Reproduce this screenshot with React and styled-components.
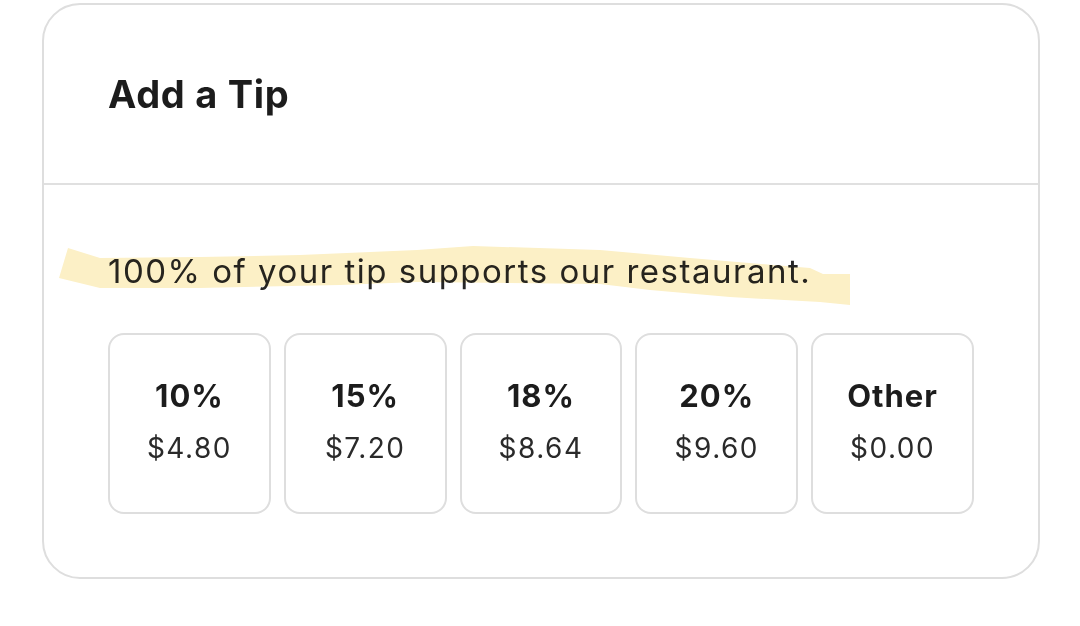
import React from "react";
import styled, { createGlobalStyle } from "styled-components";

const Global = createGlobalStyle`
  html, body { margin: 0; padding: 0; background: #ffffff; }
  body { font-family: Inter, "Noto Sans", sans-serif; color: #1f1f1f; }
`;

const Page = styled.div`
  width: 1080px;
  height: 626px;
  padding: 3px 0 0 42px;
  box-sizing: border-box;
`;

const Card = styled.section`
  position: relative;
  width: 998px;
  height: 576px;
  box-sizing: border-box;
  border: 2px solid #dedede;
  border-radius: 38px;
  background: #fff;
  display: flex;
  flex-direction: column;
`;

const Header = styled.header`
  height: 180px;
  box-sizing: border-box;
  border-bottom: 2px solid #e0e0e0;
  display: flex;
  align-items: center;
  padding: 0 64px;
`;

const Title = styled.h2`
  margin: 0;
  font-size: 38px;
  font-weight: 700;
  letter-spacing: 0.7px;
  color: #1c1c1c;
`;

const Body = styled.div`
  padding: 66px 64px 0;
  display: flex;
  flex-direction: column;
`;

const Subtitle = styled.p`
  position: relative;
  z-index: 1;
  margin: 0;
  font-size: 33px;
  line-height: 40px;
  font-weight: 400;
  letter-spacing: 1.5px;
  color: #262626;
`;

const Highlight = styled.svg`
  position: absolute;
  left: -44px;
  top: -5px;
  width: 1080px;
  height: 626px;
  pointer-events: none;
  mix-blend-mode: multiply;
  z-index: 2;
`;

const Options = styled.div`
  display: flex;
  gap: 13px;
  margin-top: 42px;
`;

const Option = styled.button`
  width: 163px;
  height: 181px;
  box-sizing: border-box;
  border: 2px solid #dedede;
  border-radius: 16px;
  background: #fff;
  display: flex;
  flex-direction: column;
  align-items: center;
  justify-content: center;
  gap: 16px;
  padding: 0 0 6px;
  font-family: inherit;
  cursor: pointer;
`;

const Percent = styled.span`
  font-size: 31px;
  font-weight: 700;
  line-height: 38px;
  letter-spacing: 1px;
  color: #1c1c1c;
`;

const Amount = styled.span`
  font-size: 28px;
  font-weight: 400;
  line-height: 34px;
  letter-spacing: 1.5px;
  color: #2a2a2a;
`;

const tips = [
  { label: "10%", amount: "$4.80" },
  { label: "15%", amount: "$7.20" },
  { label: "18%", amount: "$8.64" },
  { label: "20%", amount: "$9.60" },
  { label: "Other", amount: "$0.00" },
];

export default function App() {
  return (
    <Page>
      <Global />
      <Card>
        <Header>
          <Title>Add a Tip</Title>
        </Header>
        <Body>
          <Subtitle>100% of your tip supports our restaurant.</Subtitle>
          <Options>
            {tips.map((t) => (
              <Option key={t.label}>
                <Percent>{t.label}</Percent>
                <Amount>{t.amount}</Amount>
              </Option>
            ))}
          </Options>
        </Body>
        <Highlight viewBox="0 0 1080 626">
          <polygon
            fill="#fcf0c6"
            points="68,248 100,258 200,257 300,255 417,250 473,246 600,250 690,258 810,268 823,274 850,274 850,305 820,302 730,297 650,290 600,284 417,282 340,285 200,288 100,288 59,278"
          />
        </Highlight>
      </Card>
    </Page>
  );
}
